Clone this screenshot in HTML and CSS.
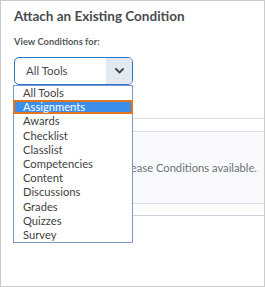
FILE: index.html
```html
<!DOCTYPE html>
<html>
<head>
<meta charset="utf-8">
<link rel="stylesheet" href="styles.css">
</head>
<body>
<div class="frame">
  <h1 class="title">Attach an Existing Condition</h1>
  <div class="label">View Conditions for:</div>
  <div class="select">
    <span class="select-value">All Tools</span>
    <span class="select-arrow">
      <svg width="9" height="6" viewBox="0 0 9 6"><path d="M1 1 L4.5 4.5 L8 1" fill="none" stroke="#494c4e" stroke-width="2" stroke-linecap="round" stroke-linejoin="round"/></svg>
    </span>
  </div>
  <div class="table">
    <div class="row head"></div>
    <div class="row body"><span class="empty">There are no Release Conditions available.</span></div>
    <div class="row foot"></div>
  </div>
  <ul class="options">
    <li>All Tools</li>
    <li class="active">Assignments</li>
    <li>Awards</li>
    <li>Checklist</li>
    <li>Classlist</li>
    <li>Competencies</li>
    <li>Content</li>
    <li>Discussions</li>
    <li>Grades</li>
    <li>Quizzes</li>
    <li>Survey</li>
  </ul>
</div>
</body>
</html>
```

FILE: styles.css
```css
html, body {
  margin: 0;
  padding: 0;
  background: #fff;
}
.frame {
  position: relative;
  width: 265px;
  height: 287px;
  box-sizing: border-box;
  border: 1px solid #cbcbcb;
  padding: 6px 0 0 13px;
  font-family: Lato, "Open Sans", sans-serif;
  overflow: hidden;
}
.title {
  margin: 0;
  font-size: 13.5px;
  line-height: 18px;
  font-weight: 700;
  color: #494c4e;
}
.label {
  margin-top: 11px;
  font-size: 9.4px;
  line-height: 12px;
  font-weight: 700;
  color: #565a5c;
}
.select {
  margin-top: 9px;
  width: 119px;
  height: 28px;
  box-sizing: border-box;
  border: 1px solid #2b74c6;
  border-radius: 5px;
  display: flex;
  overflow: hidden;
}
.select-value {
  flex: 1;
  padding-left: 11px;
  font-size: 11.4px;
  line-height: 26px;
  color: #494c4e;
}
.select-arrow {
  width: 26px;
  background: #e3e9f1;
  display: flex;
  align-items: center;
  justify-content: center;
}
.table {
  margin-top: 33px;
}
.row {
  border-top: 1px solid #d9dee5;
  box-sizing: border-box;
}
.row.head {
  height: 13px;
}
.row.body {
  height: 72px;
  background: #f9fafe;
  display: flex;
  align-items: center;
  justify-content: flex-end;
  padding-right: 7px;
}
.row.foot {
  height: 13px;
  border-bottom: 1px solid #cdd3dc;
}
.empty {
  font-size: 11.2px;
  color: #6e7376;
  white-space: nowrap;
}
.options {
  position: absolute;
  left: 12px;
  top: 84px;
  width: 120px;
  box-sizing: border-box;
  margin: 0;
  padding: 0;
  list-style: none;
  background: #fff;
  border: 1px solid #7d97cb;
}
.options li {
  height: 14.2px;
  line-height: 14px;
  padding-left: 9px;
  font-size: 11.2px;
  color: #3f3f3f;
  box-sizing: border-box;
  white-space: nowrap;
}
.options li.active {
  background: #3d8ee8;
  color: #fff;
  border: 2px solid #e2761e;
  margin: 0 -1px;
  padding-left: 8px;
  line-height: 10px;
}
```
